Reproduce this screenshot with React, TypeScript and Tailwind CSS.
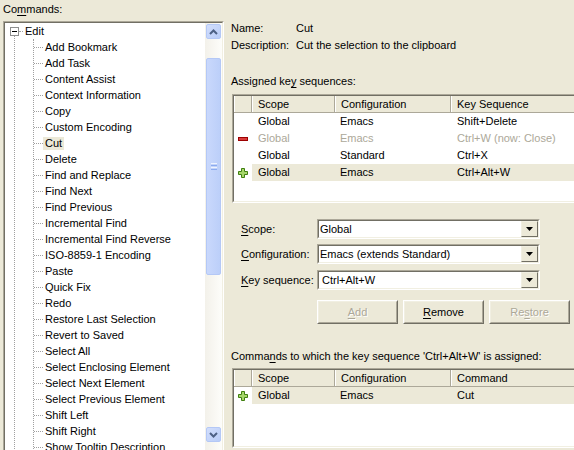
import React from "react";

const commands = [
  "Add Bookmark",
  "Add Task",
  "Content Assist",
  "Context Information",
  "Copy",
  "Custom Encoding",
  "Cut",
  "Delete",
  "Find and Replace",
  "Find Next",
  "Find Previous",
  "Incremental Find",
  "Incremental Find Reverse",
  "ISO-8859-1 Encoding",
  "Paste",
  "Quick Fix",
  "Redo",
  "Restore Last Selection",
  "Revert to Saved",
  "Select All",
  "Select Enclosing Element",
  "Select Next Element",
  "Select Previous Element",
  "Shift Left",
  "Shift Right",
  "Show Tooltip Description",
];

function PlusIcon() {
  return (
    <svg width="10" height="10" viewBox="0 0 10 10">
      <polygon
        points="3.5,0.5 6.5,0.5 6.5,3.5 9.5,3.5 9.5,6.5 6.5,6.5 6.5,9.5 3.5,9.5 3.5,6.5 0.5,6.5 0.5,3.5 3.5,3.5"
        fill="#a6d66a"
        stroke="#3f7f10"
      />
    </svg>
  );
}

function MinusIcon() {
  return (
    <svg width="10" height="4" viewBox="0 0 10 4">
      <rect x="0.5" y="0.5" width="9" height="3" fill="#d83a3a" stroke="#9c0000" />
    </svg>
  );
}

function Chevron({ up }: { up?: boolean }) {
  return (
    <svg width="9" height="6" viewBox="0 0 9 6">
      <polyline
        points={up ? "1,5 4.5,1.5 8,5" : "1,1 4.5,4.5 8,1"}
        fill="none"
        stroke="#4d6185"
        strokeWidth="2"
      />
    </svg>
  );
}

function ScrollButton({ up }: { up?: boolean }) {
  return (
    <div className="m-px flex h-[15px] w-[15px] items-center justify-center rounded-[2px] border border-[#b4c8f6] bg-gradient-to-br from-[#d2defc] to-[#b9cdf8]">
      <Chevron up={up} />
    </div>
  );
}

function Scrollbar() {
  return (
    <div className="flex w-[17px] shrink-0 flex-col bg-gradient-to-r from-[#f3f1ea] to-[#fdfdfa]">
      <ScrollButton up />
      <div className="h-[18px] shrink-0" />
      <div className="mx-px flex h-[217px] shrink-0 flex-col items-center justify-center gap-px rounded-[2px] border border-[#b4c8f6] bg-gradient-to-r from-[#c9d8fc] to-[#bccff9]">
        <div className="h-px w-[6px] bg-[#eef3fe]" />
        <div className="h-px w-[6px] bg-[#8cabef]" />
        <div className="h-px w-[6px] bg-[#eef3fe]" />
        <div className="h-px w-[6px] bg-[#8cabef]" />
      </div>
      <div className="h-[151px] shrink-0" />
      <ScrollButton />
    </div>
  );
}

function Tree() {
  return (
    <div className="h-[440px] w-[221px] border border-t-[#aca899] border-l-[#aca899] border-b-white border-r-white">
      <div className="flex h-full border border-t-[#716f64] border-l-[#716f64] border-b-[#f1efe2] border-r-[#f1efe2] bg-white">
        <div className="min-w-0 flex-1 overflow-hidden whitespace-nowrap">
          <div className="flex h-[16px] items-center">
            <svg className="ml-[5px]" width="9" height="9" viewBox="0 0 9 9">
              <rect x="0.5" y="0.5" width="8" height="8" fill="#fff" stroke="#8e8f8f" />
              <line x1="2" y1="4.5" x2="7" y2="4.5" stroke="#000" />
            </svg>
            <div className="w-[4px] border-t border-dotted border-[#a0a0a0]" />
            <span className="ml-[2px]">Edit</span>
          </div>
          <div className="flex">
            <div className="-mt-[3px] ml-[9px] w-[19px] shrink-0 border-l border-dotted border-[#a0a0a0]" />
            <div className="flex-1 border-l border-dotted border-[#a0a0a0]">
              {commands.map((c) => (
                <div key={c} className="flex h-[16px] items-center">
                  <div className="w-[9px] shrink-0 border-t border-dotted border-[#a0a0a0]" />
                  <span className={c === "Cut" ? "bg-[#ece9d8] px-[2px]" : "px-[2px]"}>{c}</span>
                </div>
              ))}
            </div>
          </div>
        </div>
        <Scrollbar />
      </div>
    </div>
  );
}

function HeadCell({ w, label }: { w: string; label?: string }) {
  return (
    <div
      className={`${w} flex h-full shrink-0 items-center border-l border-white border-r border-r-[#aca899] pl-[5px]`}
    >
      {label}
    </div>
  );
}

type RowData = { icon?: "plus" | "minus"; a: string; b: string; c: string; gray?: boolean; sel?: boolean };

function Table({ last, rows, h }: { last: string; rows: RowData[]; h: string }) {
  return (
    <div className={`${h} ml-[1px] w-[360px] shrink-0 border border-t-[#aca899] border-l-[#aca899] border-b-white border-r-white`}>
      <div className="h-full border border-t-[#716f64] border-l-[#716f64] border-b-[#f1efe2] border-r-[#f1efe2] bg-white">
        <div className="flex h-[17px] border-b border-[#aca899] bg-[#ece9d8]">
          <HeadCell w="w-[18px]" />
          <HeadCell w="w-[83px]" label="Scope" />
          <HeadCell w="w-[116px]" label="Configuration" />
          <HeadCell w="flex-1" label={last} />
        </div>
        {rows.map((r, i) => (
          <div key={i} className="flex h-[17px]">
            <div className="flex w-[18px] shrink-0 items-center justify-center">
              {r.icon === "plus" && <PlusIcon />}
              {r.icon === "minus" && <MinusIcon />}
            </div>
            <div
              className={`flex flex-1 items-center ${r.sel ? "bg-[#ece9d8]" : ""} ${r.gray ? "text-[#aca899]" : ""}`}
            >
              <div className="w-[83px] shrink-0 pl-[6px]">{r.a}</div>
              <div className="w-[116px] shrink-0 pl-[5px]">{r.b}</div>
              <div className="flex-1 pl-[6px]">{r.c}</div>
            </div>
          </div>
        ))}
      </div>
    </div>
  );
}

function Combo({ value, edit }: { value: string; edit?: boolean }) {
  return (
    <div className="h-[20px] w-[223px] border border-t-[#aca899] border-l-[#aca899] border-b-white border-r-white">
      <div className="flex h-full items-center border border-t-[#716f64] border-l-[#716f64] border-b-[#f1efe2] border-r-[#f1efe2] bg-white">
        <div className={`flex-1 ${edit ? "pl-[3px]" : "pl-[1px]"}`}>{value}</div>
        <div className="flex h-full w-[17px] items-center justify-center border border-t-[#f1efe2] border-l-[#f1efe2] border-b-[#716f64] border-r-[#716f64] bg-[#ece9d8]">
          <svg width="7" height="4" viewBox="0 0 7 4">
            <polygon points="0,0 7,0 3.5,4" fill="#000" />
          </svg>
        </div>
      </div>
    </div>
  );
}

function Button({ children, disabled }: { children: React.ReactNode; disabled?: boolean }) {
  return (
    <div className="h-[24px] w-[81px] border border-t-white border-l-white border-b-[#716f64] border-r-[#716f64]">
      <div
        className={`flex h-full items-center justify-center border border-t-[#f1efe2] border-l-[#f1efe2] border-b-[#aca899] border-r-[#aca899] bg-[#ece9d8] ${
          disabled ? "text-[#aca899] [text-shadow:1px_1px_0_#fff]" : ""
        }`}
      >
        <span>{children}</span>
      </div>
    </div>
  );
}

function U({ children }: { children: React.ReactNode }) {
  return <span className="underline underline-offset-[2px]">{children}</span>;
}

export default function App() {
  return (
    <div className="flex h-[450px] w-[574px] overflow-hidden bg-[#ece9d8] font-['Liberation_Sans',Arial,sans-serif] text-[11px] leading-[13px] text-black">
      <div className="flex w-[224px] shrink-0 flex-col pl-[3px]">
        <div className="h-[21px] shrink-0 pt-[3px]">
          Co<U>m</U>mands:
        </div>
        <Tree />
      </div>

      <div className="flex min-w-0 flex-1 flex-col overflow-hidden whitespace-nowrap pl-[7px] pt-[20px]">
        <div className="flex h-[17px] shrink-0 items-center">
          <div className="w-[65px]">Name:</div>
          <div>Cut</div>
        </div>
        <div className="flex h-[17px] shrink-0 items-center">
          <div className="w-[65px]">Description:</div>
          <div>Cut the selection to the clipboard</div>
        </div>

        <div className="mt-[19px] flex h-[17px] shrink-0 items-center">
          <span>
            Assigned ke<U>y</U> sequences:
          </span>
        </div>
        <div className="mt-[4px]">
          <Table
            h="h-[109px]"
            last="Key Sequence"
            rows={[
              { a: "Global", b: "Emacs", c: "Shift+Delete" },
              { icon: "minus", a: "Global", b: "Emacs", c: "Ctrl+W (now: Close)", gray: true },
              { a: "Global", b: "Standard", c: "Ctrl+X" },
              { icon: "plus", a: "Global", b: "Emacs", c: "Ctrl+Alt+W", sel: true },
            ]}
          />
        </div>

        <div className="ml-[10px] mt-[16px] flex flex-col">
          <div className="flex h-[20px] items-center">
            <div className="w-[76px]">
              <U>S</U>cope:
            </div>
            <Combo value="Global" />
          </div>
          <div className="mt-[5px] flex h-[20px] items-center">
            <div className="w-[76px]">
              <U>C</U>onfiguration:
            </div>
            <Combo value="Emacs (extends Standard)" />
          </div>
          <div className="mt-[6px] flex h-[20px] items-center">
            <div className="w-[76px]">
              <U>K</U>ey sequence:
            </div>
            <Combo value="Ctrl+Alt+W" edit />
          </div>
          <div className="ml-[76px] mt-[10px] flex gap-[5px]">
            <Button disabled>
              <U>A</U>dd
            </Button>
            <Button>
              <U>R</U>emove
            </Button>
            <Button disabled>
              Re<U>s</U>tore
            </Button>
          </div>
        </div>

        <div className="mt-[24px] flex h-[17px] shrink-0 items-center">
          <span>
            Comma<U>n</U>ds to which the key sequence 'Ctrl+Alt+W' is assigned:
          </span>
        </div>
        <div className="mt-[3px]">
          <Table
            h="h-[80px]"
            last="Command"
            rows={[{ icon: "plus", a: "Global", b: "Emacs", c: "Cut", sel: true }]}
          />
        </div>
      </div>
    </div>
  );
}
